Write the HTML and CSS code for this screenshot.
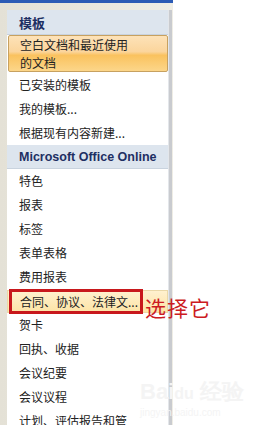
FILE: index.html
```html
<!DOCTYPE html>
<html>
<head>
  <title>新建文档 - 模板</title>
  <meta name="viewport" content="width=device-width, initial-scale=1" />
  <link rel="stylesheet" href="styles.css">
</head>
<body>
  <div class="frame">
    <div class="pane">
      <div class="group">模板</div>
      <div class="item selected">空白文档和最近使用<br>的文档</div>
      <div class="item">已安装的模板</div>
      <div class="item">我的模板...</div>
      <div class="item">根据现有内容新建...</div>

      <div class="group latin">Microsoft Office Online</div>
      <div class="item">特色</div>
      <div class="item">报表</div>
      <div class="item">标签</div>
      <div class="item">表单表格</div>
      <div class="item">费用报表</div>
      <div class="item hover">合同、协议、法律文...</div>
      <div class="item">贺卡</div>
      <div class="item">回执、收据</div>
      <div class="item">会议纪要</div>
      <div class="item">会议议程</div>
      <div class="item">计划、评估报告和管</div>
    </div>
  </div>

  <!-- annotation drawn over the screenshot -->
  <div class="mark"></div>
  <div class="note">选择它</div>

  <div class="watermark">
    <div class="wm-logo">Bai<span>du</span> 经验</div>
    <div class="wm-url">jingyan.baidu.com</div>
  </div>
</body>
</html>
```

FILE: styles.css
```css
body {
  margin: 0;
  width: 257px;
  height: 425px;
  overflow: hidden;
  background: #fff;
  font-family: "Noto Sans CJK SC", "DejaVu Sans", sans-serif;
  color: #222;
  position: relative;
}

.frame {
  width: 166px;
  height: 422px;
  background: linear-gradient(to right, #e4e1d6, #efede5);
  border-top: 3px solid #2c5bb5;
  padding: 7px 0 0 7px;
  box-sizing: content-box;
}

.pane {
  width: 161px;
  height: 100%;
  background: #fff;
  border-right: 1px solid #e3e6ea;
  box-shadow: 3px 0 0 #c9cbcf;
}

.group {
  height: 25px;
  line-height: 25px;
  padding-left: 12px;
  background: #dde5ee;
  border-bottom: 1px solid #c9d3de;
  box-sizing: border-box;
  color: #1d2f63;
  font-weight: bold;
  font-size: 13px;
}

.group.latin {
  height: 24px;
  line-height: 24px;
  font-family: "Liberation Sans", "DejaVu Sans", sans-serif;
  font-size: 12.5px;
}

.item {
  height: 24px;
  line-height: 24px;
  padding-left: 12px;
  font-size: 12px;
  white-space: nowrap;
}

.item.selected {
  height: 37px;
  line-height: 18px;
  padding: 0 0 0 11px;
  margin: 0 0 1px 1px;
  border: 1px solid #c7a160;
  border-radius: 2px;
  background: linear-gradient(#fde2b8 0%, #fbd59c 45%, #fac25e 55%, #fcd68a 100%);
  box-sizing: border-box;
}

.item.hover {
  margin-top: 1px;
  height: 23px;
  line-height: 22px;
  border: 1px solid #ead8a8;
  background: linear-gradient(#fff1cf, #fde4a6);
  box-sizing: border-box;
}

.mark {
  position: absolute;
  left: 9px;
  top: 289px;
  width: 134px;
  height: 25px;
  border: 3px solid #c8181c;
  box-sizing: border-box;
}

.note {
  position: absolute;
  left: 145px;
  top: 294px;
  font-size: 21px;
  line-height: 26px;
  color: #cc1b22;
  letter-spacing: 1px;
}

.watermark {
  position: absolute;
  left: 140px;
  top: 380px;
  color: #f4f4f4;
}

.wm-logo {
  font-family: "Liberation Sans", sans-serif;
  font-size: 22px;
  font-weight: bold;
  line-height: 24px;
}

.wm-logo span {
  font-size: 16px;
}

.wm-url {
  font-family: "Liberation Sans", sans-serif;
  font-size: 10px;
  line-height: 14px;
}
```
